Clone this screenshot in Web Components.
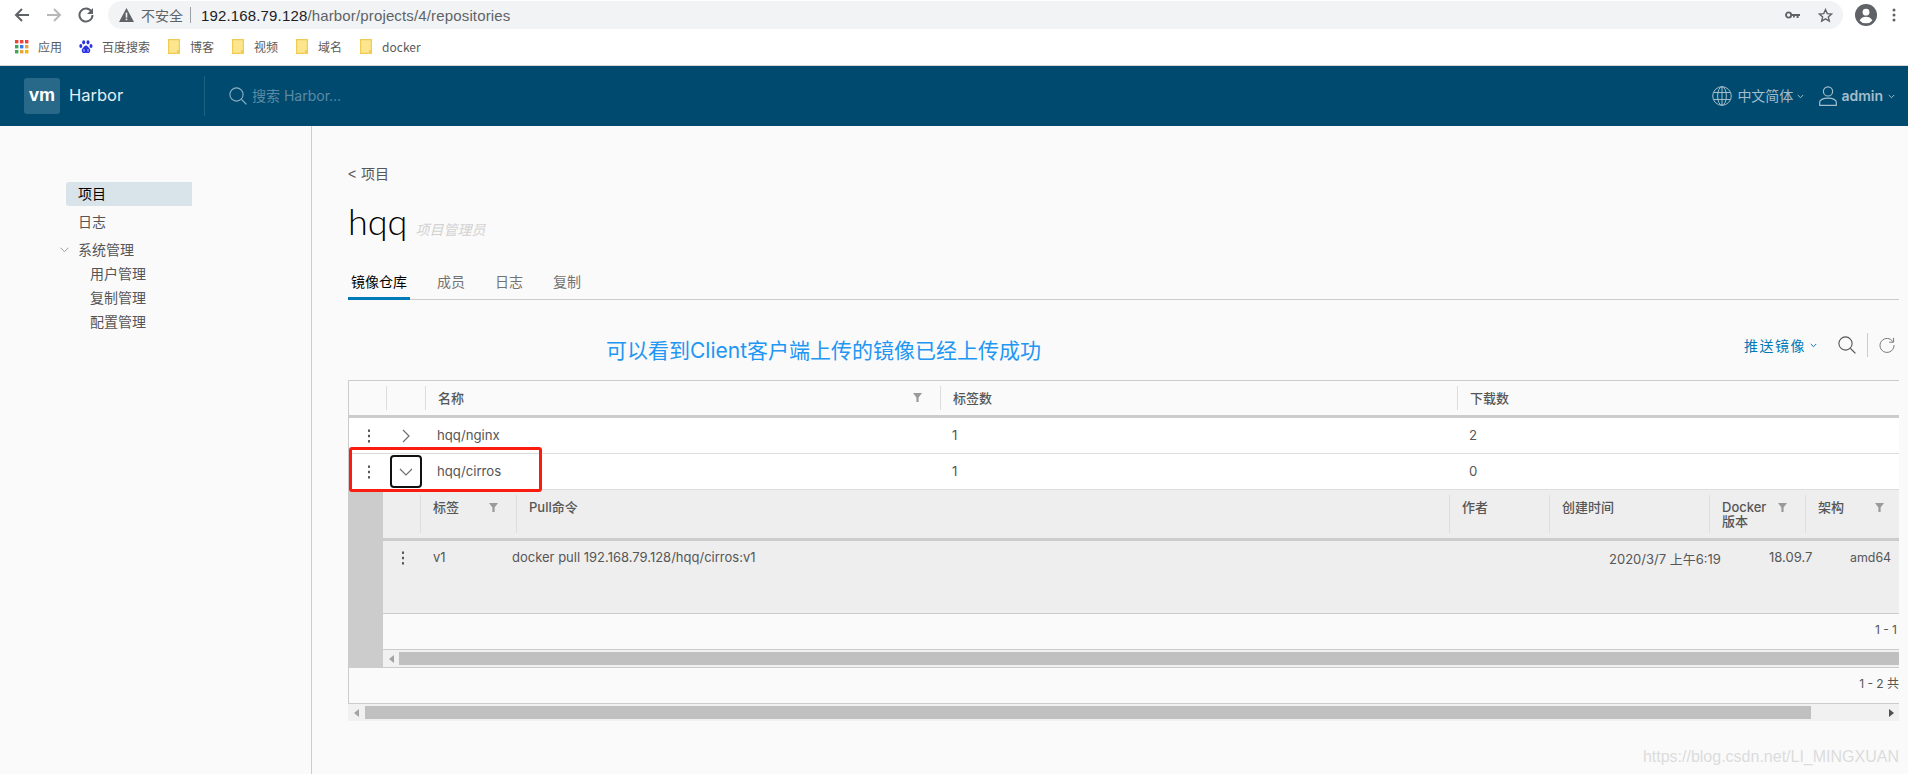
<!DOCTYPE html>
<html lang="zh">
<head>
<meta charset="utf-8">
<title>Harbor</title>
<style>
    html, body { margin: 0; padding: 0; height: 100%; overflow: hidden; background: #fafafa; }
    body { font-family: "Inter", "Noto Sans CJK SC", sans-serif; color: #565656; }
    #app { display: flex; flex-direction: column; width: 1908px; height: 774px; position: relative; overflow: hidden; }
</style>
</head>
<body>
<div id="app">
    <browser-toolbar url-host="192.168.79.128" url-path="/harbor/projects/4/repositories"></browser-toolbar>
    <bookmark-bar>
        <bookmark-item kind="apps">应用</bookmark-item>
        <bookmark-item kind="baidu">百度搜索</bookmark-item>
        <bookmark-item kind="folder">博客</bookmark-item>
        <bookmark-item kind="folder">视频</bookmark-item>
        <bookmark-item kind="folder">域名</bookmark-item>
        <bookmark-item kind="folder">docker</bookmark-item>
    </bookmark-bar>
    <harbor-header></harbor-header>
    <main-area>
        <side-nav></side-nav>
        <project-page></project-page>
    </main-area>
    <water-mark>https://blog.csdn.net/LI_MINGXUAN</water-mark>
</div>

<script>
(function() {
    "use strict";

    const CJK = `"Noto Sans CJK SC", sans-serif`;

    const filterIcon = `<svg width="9" height="9" viewBox="0 0 9 9"><path d="M0 0h9L5.6 4.4V9H3.4V4.4z" fill="#9a9a9a"/></svg>`;
    const dotsIcon = `<svg width="4" height="14" viewBox="0 0 4 14"><g fill="#565656"><rect x="1" y="0.5" width="2" height="2.4"/><rect x="1" y="5.8" width="2" height="2.4"/><rect x="1" y="11.1" width="2" height="2.4"/></g></svg>`;
    const caret = (color) => `<svg width="7" height="5" viewBox="0 0 7 5"><path d="M.8 1l2.7 2.7L6.2 1" fill="none" stroke="${color}" stroke-width="1"/></svg>`;
    const searchIcon = (color, size) => `<svg width="${size}" height="${size}" viewBox="0 0 18 18"><circle cx="7.5" cy="7.5" r="6.6" fill="none" stroke="${color}" stroke-width="1.1"/><path d="M12.4 12.4l5 5" stroke="${color}" stroke-width="1.3" fill="none"/></svg>`;

    // base class: every element just stamps its own html into an open shadow root
    class ShadowBase extends HTMLElement {
        constructor() {
            super();
            this.attachShadow({mode: 'open'}).innerHTML = this.render();
        }
        render() { return '<slot></slot>'; }
    }

    class BrowserToolbar extends ShadowBase {
        render() {
            return `
<style>
    :host { display: flex; align-items: flex-start; height: 31px; background: #fff; flex: none; }
    .btns { width: 108px; height: 30px; display: flex; align-items: center; padding-left: 14px; gap: 16px; box-sizing: border-box; }
    .pill { width: 1735px; height: 28px; margin-top: 1px; background: #f1f3f4; border-radius: 14px; display: flex; align-items: center; box-sizing: border-box; padding-left: 11px; font: 15px "Liberation Sans", ${CJK}; letter-spacing: .15px; }
    .warn { margin-right: 7px; display: block; }
    .nosafe { color: #5f6368; font-size: 14px; font-family: ${CJK}; letter-spacing: 0; }
    .sep { width: 1px; height: 16px; background: #9aa0a6; margin: 0 10px 0 7px; }
    .host { color: #202124; }
    .path { color: #5f6368; }
    .right { margin-left: auto; display: flex; align-items: center; gap: 18px; padding-right: 10px; }
    .tail { flex: 1; display: flex; align-items: center; height: 30px; gap: 15px; padding-left: 12px; }
    svg { display: block; }
</style>
<div class="btns">
    <svg width="16" height="16" viewBox="0 0 16 16"><path d="M15 8H2.6M8 2L2 8l6 6" fill="none" stroke="#5f6368" stroke-width="2"/></svg>
    <svg width="16" height="16" viewBox="0 0 16 16"><path d="M1 8h12.4M8 2l6 6-6 6" fill="none" stroke="#b6b8ba" stroke-width="2"/></svg>
    <svg width="16" height="16" viewBox="0 0 16 16"><path d="M13.4 4.4A6.5 6.5 0 1 0 14.5 8" fill="none" stroke="#5f6368" stroke-width="2"/><path d="M15 1v6H9z" fill="#5f6368"/></svg>
</div>
<div class="pill">
    <svg class="warn" width="15" height="14" viewBox="0 0 15 14"><path d="M7.5 0L15 14H0z" fill="#5f6368"/><rect x="6.7" y="4.6" width="1.6" height="5" fill="#f1f3f4"/><rect x="6.7" y="10.6" width="1.6" height="1.6" fill="#f1f3f4"/></svg>
    <span class="nosafe">不安全</span><span class="sep"></span>
    <span class="host">${this.getAttribute('url-host')}</span><span class="path">${this.getAttribute('url-path')}</span>
    <div class="right">
        <svg width="15" height="8" viewBox="0 0 15 8"><circle cx="3.6" cy="4" r="2.6" fill="none" stroke="#5f6368" stroke-width="1.9"/><path d="M6 3h9v2h-1.4v2h-2V5H9.8v1.5H8V5H6z" fill="#5f6368"/></svg>
        <svg width="15" height="15" viewBox="0 0 24 24"><path d="M12 2.6l2.8 6.4 6.9.6-5.2 4.6 1.6 6.8-6.1-3.6-6.1 3.6 1.6-6.8L2.3 9.6 9.2 9z" fill="none" stroke="#5f6368" stroke-width="2.2"/></svg>
    </div>
</div>
<div class="tail">
    <svg width="22" height="22" viewBox="0 0 22 22"><circle cx="11" cy="11" r="11" fill="#5f6368"/><circle cx="11" cy="8.2" r="3.4" fill="#fff"/><path d="M4.6 16.4c1.4-2.6 4-3.6 6.4-3.6s5 1 6.4 3.6a8.4 8.4 0 0 1-12.8 0z" fill="#fff"/></svg>
    <svg width="4" height="14" viewBox="0 0 4 14"><g fill="#5f6368"><circle cx="2" cy="2" r="1.5"/><circle cx="2" cy="7" r="1.5"/><circle cx="2" cy="12" r="1.5"/></g></svg>
</div>`;
        }
    }

    class BookmarkBar extends ShadowBase {
        render() {
            return `
<style>
    :host { display: flex; align-items: center; height: 31px; background: #fff; border-bottom: 1px solid #d6d6d6; padding: 0 0 3px 15px; flex: none; gap: 18px; }
</style>
<slot></slot>`;
        }
    }

    class BookmarkItem extends ShadowBase {
        render() {
            const kind = this.getAttribute('kind');
            const icons = {
                apps: `<svg width="14" height="14" viewBox="0 0 14 14"><g><rect width="3.4" height="3.4" fill="#e8453c"/><rect x="5" width="3.4" height="3.4" fill="#e8453c"/><rect x="10" width="3.4" height="3.4" fill="#e8453c"/><rect y="5" width="3.4" height="3.4" fill="#3aa757"/><rect x="5" y="5" width="3.4" height="3.4" fill="#3b78e7"/><rect x="10" y="5" width="3.4" height="3.4" fill="#e8a33c"/><rect y="10" width="3.4" height="3.4" fill="#3aa757"/><rect x="5" y="10" width="3.4" height="3.4" fill="#e8a33c"/><rect x="10" y="10" width="3.4" height="3.4" fill="#f4b400"/></g></svg>`,
                baidu: `<svg width="14" height="14" viewBox="0 0 14 14"><g fill="#2932e1"><ellipse cx="4.7" cy="2.3" rx="1.5" ry="2.1"/><ellipse cx="9" cy="2.3" rx="1.5" ry="2.1"/><ellipse cx="1.8" cy="6" rx="1.5" ry="2"/><ellipse cx="12" cy="6" rx="1.5" ry="2"/><path d="M7 5.6c1.6 0 2 1.6 3.4 2.8 1.5 1.4 1 4.4-1.4 4.6-1 .1-1.4-.3-2-.3s-1 .4-2 .3c-2.4-.2-2.9-3.2-1.4-4.6C5 7.2 5.4 5.6 7 5.6z"/></g><path d="M5 9.2v2.4M9 9.2v2.4" stroke="#cfd2fb" stroke-width="1"/></svg>`,
                folder: `<svg width="12" height="15" viewBox="0 0 12 15"><path d="M.6.6h7.6l0 0 3.2 0V14.4H.6z" fill="#fde58d" stroke="#f0cc55" stroke-width="1.2"/><rect x="9" y="11" width="2" height="3" fill="#f0cc55"/></svg>`
            };
            const gap = kind === 'folder' ? 10 : 9;
            const pull = kind === 'apps' ? 'margin-right: -1px;' : '';
            return `
<style>
    :host { display: inline-flex; align-items: center; gap: ${gap}px; ${pull} font: 12px "Noto Sans CJK SC", "Liberation Sans", sans-serif; color: #5a5a5a; }
    svg { display: block; }
</style>
${icons[kind]}<slot></slot>`;
        }
    }

    class HarborHeader extends ShadowBase {
        render() {
            return `
<style>
    :host { display: flex; align-items: center; height: 60px; background: #004a70; flex: none; padding-left: 24px; font-family: "Inter", ${CJK}; }
    .logo { width: 36px; height: 36px; background: #28698a; border-radius: 3px; display: flex; align-items: center; justify-content: center; color: #fff; font: bold 18px/1 "Liberation Sans", sans-serif; padding-bottom: 3px; box-sizing: border-box; }
    .name { color: #e6eef2; font-size: 16.5px; font-weight: 400; margin-left: 9px; width: 135px; margin-bottom: 2px; }
    .div { width: 1px; height: 40px; background: #1c5f80; }
    .search { display: flex; align-items: center; margin-left: 24px; gap: 5px; color: #5d8aa3; font-size: 14px; }
    .search span { margin-bottom: 2px; }
    .right { margin-left: auto; display: flex; align-items: center; color: #a3bdcb; font-size: 14px; padding-right: 13px; }
    .right span.t, .right b { margin-bottom: 2px; }
    .right b { font-weight: 600; }
    .c { margin: 0 0 0 4px; display: block; }
    svg { display: block; }
</style>
<div class="logo">vm</div>
<div class="name">Harbor</div>
<div class="div"></div>
<div class="search">${searchIcon('#8fb0c2', 18)}<span>搜索 Harbor...</span></div>
<div class="right">
    <svg width="20" height="20" viewBox="0 0 20 20" style="margin-right:5px"><g fill="none" stroke="#a3bdcb" stroke-width="1"><circle cx="10" cy="10" r="9.3"/><ellipse cx="10" cy="10" rx="4.4" ry="9.3"/><path d="M10 .7v18.6M1.6 6.5h16.8M1.6 13.5h16.8"/></g></svg>
    <span class="t">中文简体</span><span class="c">${caret('#a3bdcb')}</span>
    <svg width="18" height="20" viewBox="0 0 18 20" style="margin-left:15px;margin-right:4px"><g fill="none" stroke="#a3bdcb" stroke-width="1.2"><circle cx="9" cy="5.4" r="4.6"/><path d="M.7 19.3v-3.2c0-2 3-3.9 8.3-3.9s8.3 1.9 8.3 3.9v3.2z"/></g></svg>
    <b>admin</b><span class="c" style="margin-left:5px">${caret('#a3bdcb')}</span>
</div>`;
        }
    }

    class MainArea extends ShadowBase {
        render() {
            return `
<style>
    :host { display: flex; flex: 1; min-height: 0; background: #fafafa; }
</style>
<slot></slot>`;
        }
    }

    class SideNav extends ShadowBase {
        render() {
            return `
<style>
    :host { display: block; width: 311px; flex: none; border-right: 1px solid #ccc; padding-top: 56px; font: 14px/22px ${CJK}; color: #565656; box-sizing: content-box; }
    .item { height: 24px; margin-left: 66px; padding-left: 12px; width: 114px; margin-bottom: 4px; }
    .active { background: #d9e4ea; border-radius: 3px 0 0 3px; color: #000; }
    .group { display: flex; align-items: center; margin-left: 60px; height: 24px; }
    .group span { margin-left: 9px; height: 24px; }
    .sub { height: 24px; margin-left: 90px; }
    svg { display: block; }
</style>
<div class="item active">项目</div>
<div class="item">日志</div>
<div class="group"><svg width="9" height="6" viewBox="0 0 9 6"><path d="M.5.7l4 4 4-4" fill="none" stroke="#9a9a9a" stroke-width="1"/></svg><span>系统管理</span></div>
<div class="sub">用户管理</div>
<div class="sub">复制管理</div>
<div class="sub">配置管理</div>`;
        }
    }

    class ProjectPage extends ShadowBase {
        render() {
            return `
<style>
    :host { display: block; flex: 1; min-width: 0; padding: 38px 9px 0 36px; }
    .back { font: 14px/20px "Liberation Sans", ${CJK}; color: #565656; word-spacing: 1px; }
    .title { display: flex; align-items: baseline; margin-top: 12px; height: 50px; }
    .title h1 { font: 300 36px/50px "Lato", sans-serif; margin: 0; color: #000; }
    .title em { font: italic 14px ${CJK}; color: #d2d2d2; margin-left: 8px; }
    .tabs { display: flex; border-bottom: 1px solid #ccc; margin-top: 24px; font: 14px/22px ${CJK}; color: #737373; box-sizing: content-box; height: 29px; }
    .tabs div { margin-right: 30px; }
    .tabs .on { color: #000; padding: 0 3px; height: 27px; margin-right: 27px; border-bottom: 3px solid #0079b8; }
</style>
<div class="back">&lt; 项目</div>
<div class="title"><h1>hqq</h1><em>项目管理员</em></div>
<div class="tabs"><div class="on">镜像仓库</div><div>成员</div><div>日志</div><div>复制</div></div>
<repo-toolbar note="可以看到Client客户端上传的镜像已经上传成功"></repo-toolbar>
<repo-grid></repo-grid>`;
        }
    }

    class RepoToolbar extends ShadowBase {
        render() {
            return `
<style>
    :host { display: flex; align-items: center; height: 24px; margin: 33px 0 23px 0; }
    .note { margin: 12px 0 0 258px; font: 21px/24px "Inter", ${CJK}; color: #2196f3; white-space: nowrap; }
    .push { margin-left: auto; color: #0079b8; font: 14px ${CJK}; letter-spacing: 1.5px; display: flex; align-items: center; gap: 4px; }
    .sep { width: 1px; height: 24px; background: #ccc; margin: 0 11px 0 11px; }
    svg { display: block; }
    .s { margin-left: 21px; }
    .r { margin-right: 4px; }
</style>
<span class="note">${this.getAttribute('note')}</span>
<span class="push">推送镜像${caret('#0079b8')}</span>
<span class="s">${searchIcon('#565656', 18)}</span>
<span class="sep"></span>
<svg class="r" width="16" height="16" viewBox="0 0 16 16"><path d="M14 4.8A7 7 0 1 0 15 8" fill="none" stroke="#777" stroke-width="1"/><path d="M14.6 .8v4.4h-4.4" fill="none" stroke="#777" stroke-width="1"/></svg>`;
        }
    }

    class ScrollTrack extends ShadowBase {
        render() {
            const thumbLeft = this.getAttribute('start');
            const thumbWidth = this.getAttribute('size');
            const end = this.hasAttribute('end-arrow');
            return `
<style>
    :host { display: flex; align-items: center; height: 17px; background: #f1f1f1; flex: none; position: relative; box-sizing: border-box; }
    .a { width: ${thumbLeft}px; flex: none; display: flex; justify-content: center; }
    .t { width: ${thumbWidth}px; height: 13px; background: #c0c0c0; flex: none; }
    .e { flex: 1; display: flex; justify-content: flex-end; padding-right: 5px; }
    svg { display: block; }
</style>
<div class="a"><svg width="5" height="8" viewBox="0 0 5 8"><path d="M5 0v8L0 4z" fill="#a3a3a3"/></svg></div>
<div class="t"></div>
<div class="e">${end ? `<svg width="5" height="8" viewBox="0 0 5 8"><path d="M0 0v8l5-4z" fill="#505050"/></svg>` : ''}</div>`;
        }
    }

    class RepoGrid extends ShadowBase {
        render() {
            return `
<style>
    :host { display: block; width: 1551px; font: 13px "Inter", ${CJK}; color: #565656; }
    .box { border-left: 1px solid #ccc; border-top: 1px solid #ccc; box-sizing: border-box; }
    .cols { display: grid; grid-template-columns: 37px 39px 515px 517px 442px; align-items: stretch; }
    .head { border-bottom: 3px solid #ccc; box-sizing: content-box; height: 34px; background: #fafafa; font-weight: 500; font-size: 13px; }
    .head > div { display: flex; align-items: center; margin: 5px 0; border-left: 1px solid #ddd; padding: 0 18px 2px 12px; box-sizing: border-box; height: 24px; justify-content: space-between; }
    .head > div:first-child { border-left: 0; }
    .row { height: 35px; background: #fff; border-bottom: 1px solid #ddd; font-size: 13.2px; }
    .row > div { display: flex; align-items: center; padding: 0 0 2px 12px; }
    .row > .c { justify-content: center; padding: 0; }
    .row > .c:first-child { padding-left: 3px; }
    .row svg, .head svg { display: block; }
    .foc { width: 28px; height: 29px; border: 2px solid #111; border-radius: 4px; display: flex; align-items: center; justify-content: center; box-sizing: content-box; }
    .detail { display: flex; background: #ccc; }
    .inner { margin-left: 34px; flex: 1; min-width: 0; background: #eee; }
    .dcols { display: grid; grid-template-columns: 37px 96px 933px 100px 160px 96px 94px; height: 48px; border-bottom: 3px solid #ccc; box-sizing: content-box; font-weight: 500; font-size: 13px; }
    .dcols > div { border-left: 1px solid #ddd; margin: 5px 0; padding: 5px 12px 0; display: flex; justify-content: space-between; line-height: 14px; }
    .dcols > div:first-child { border-left: 0; }
    .dcols > div:last-child { padding-right: 9px; }
    .dcols svg { display: block; margin-top: 3px; flex: none; margin-right: 6px; }
    .drow { display: grid; grid-template-columns: 38px 79px 1097px 160px 81px 61px; height: 72px; border-bottom: 1px solid #ccc; }
    .drow > div { padding: 8px 0 0 12px; white-space: nowrap; }
    .drow > div:last-child { font-size: 12.4px; padding-top: 9px; }
    .drow > .c { padding: 10px 0 0 18px; }
    .foot { background: #fafafa; display: flex; align-items: center; justify-content: flex-end; padding: 0 2px 5px 0; box-sizing: border-box; height: 36px; border-bottom: 1px solid #ccc; font-size: 12px; white-space: nowrap; }
    .outfoot { height: 37px; box-sizing: border-box; display: flex; align-items: center; justify-content: flex-end; border-top: 1px solid #ccc; border-bottom: 1px solid #ccc; font-size: 12px; background: #fafafa; border-left: 1px solid #ccc; padding-bottom: 6px; }
    .red { position: absolute; left: 349px; top: 447px; width: 193px; height: 45px; box-sizing: border-box; border: 3px solid #fb1c10; border-radius: 3px; pointer-events: none; }
</style>
<div class="box">
    <div class="cols head">
        <div></div><div></div>
        <div>名称${filterIcon}</div>
        <div>标签数</div>
        <div>下载数</div>
    </div>
    <div class="cols row">
        <div class="c">${dotsIcon}</div>
        <div class="c"><svg width="8" height="14" viewBox="0 0 8 14"><path d="M1 1l6 6-6 6" fill="none" stroke="#6f6f6f" stroke-width="1.2"/></svg></div>
        <div>hqq/nginx</div><div>1</div><div>2</div>
    </div>
    <div class="cols row">
        <div class="c">${dotsIcon}</div>
        <div class="c"><span class="foc"><svg width="14" height="8" viewBox="0 0 14 8"><path d="M1 1l6 6 6-6" fill="none" stroke="#6f6f6f" stroke-width="1.2"/></svg></span></div>
        <div>hqq/cirros</div><div>1</div><div>0</div>
    </div>
    <div class="detail">
        <div class="inner">
            <div class="dcols">
                <div></div>
                <div>标签${filterIcon}</div>
                <div>Pull命令</div>
                <div>作者</div>
                <div>创建时间</div>
                <div>Docker<br>版本${filterIcon}</div>
                <div>架构${filterIcon}</div>
            </div>
            <div class="drow">
                <div class="c">${dotsIcon}</div>
                <div>v1</div>
                <div>docker pull 192.168.79.128/hqq/cirros:v1</div>
                <div>2020/3/7 上午6:19</div>
                <div>18.09.7</div>
                <div>amd64</div>
            </div>
            <div class="foot">1 - 1</div>
            <scroll-track start="16" size="1500"></scroll-track>
        </div>
    </div>
</div>
<div class="outfoot">1 - 2 共</div>
<scroll-track start="17" size="1446" end-arrow></scroll-track>`;
        }
        connectedCallback() {
            // annotation frame drawn on the screenshot, sits over the table
            if (!this.shadowRoot.querySelector('.red')) {
                const frame = document.createElement('div');
                frame.className = 'red';
                this.shadowRoot.appendChild(frame);
            }
        }
    }

    class WaterMark extends ShadowBase {
        render() {
            return `
<style>
    :host { position: absolute; right: 9px; top: 745px; font: 16px/24px "Liberation Sans", sans-serif; color: #dcdcdc; }
</style>
<slot></slot>`;
        }
    }

    window.customElements.define('browser-toolbar', BrowserToolbar);
    window.customElements.define('bookmark-bar', BookmarkBar);
    window.customElements.define('bookmark-item', BookmarkItem);
    window.customElements.define('harbor-header', HarborHeader);
    window.customElements.define('main-area', MainArea);
    window.customElements.define('side-nav', SideNav);
    window.customElements.define('project-page', ProjectPage);
    window.customElements.define('repo-toolbar', RepoToolbar);
    window.customElements.define('scroll-track', ScrollTrack);
    window.customElements.define('repo-grid', RepoGrid);
    window.customElements.define('water-mark', WaterMark);
})();
</script>
</body>
</html>
